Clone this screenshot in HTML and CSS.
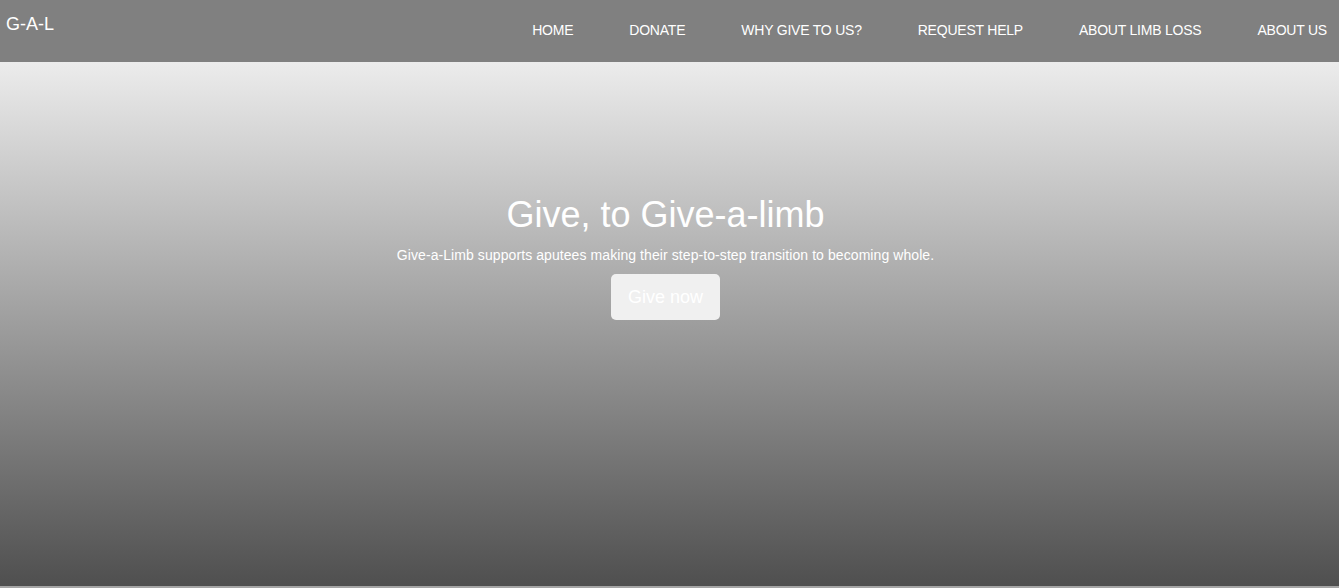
FILE: index.html
```html
<!DOCTYPE html>
<html lang="en">
<head>
<meta charset="utf-8">
<title>Give-a-Limb</title>
<link rel="stylesheet" href="styles.css">
</head>
<body>
<header class="navbar">
  <a class="brand" href="#">G-A-L</a>
  <nav class="nav">
    <a href="#">HOME</a>
    <a href="#">DONATE</a>
    <a href="#">WHY GIVE TO US?</a>
    <a href="#">REQUEST HELP</a>
    <a href="#">ABOUT LIMB LOSS</a>
    <a href="#">ABOUT US</a>
  </nav>
</header>
<section class="hero">
  <div class="hero-content">
    <h1 class="hero-title">Give, to Give-a-limb</h1>
    <p class="hero-text">Give-a-Limb supports aputees making their step-to-step transition to becoming whole.</p>
    <a class="hero-btn" href="#">Give now</a>
  </div>
</section>
<div class="strip"></div>
</body>
</html>
```

FILE: styles.css
```css
* { box-sizing: border-box; }
html, body { margin: 0; padding: 0; }
body {
  font-family: "Liberation Sans", Arial, sans-serif;
  background: #9a9a9a;
  overflow: hidden;
  height: 588px;
}
a { text-decoration: none; color: #fff; }

.navbar {
  height: 62px;
  background: #808080;
  display: flex;
  justify-content: space-between;
  align-items: flex-start;
}
.brand {
  font-size: 18px;
  line-height: 20px;
  padding: 14px 0 0 6px;
}
.nav {
  display: flex;
  gap: 56px;
  padding: 22px 12px 0 0;
}
.nav a {
  font-size: 14px;
  line-height: 16px;
  letter-spacing: -0.22px;
}

.hero {
  height: 524px;
  background: linear-gradient(to bottom, #ececec 0%, #4f4f4f 100%);
  display: flex;
  justify-content: center;
  padding-right: 8px;
}
.hero-content {
  display: flex;
  flex-direction: column;
  align-items: center;
  padding-top: 133px;
  color: #fff;
}
.hero-title {
  margin: 0;
  font-weight: normal;
  font-size: 36px;
  line-height: 40px;
}
.hero-text {
  margin: 12px 0 0;
  font-size: 14px;
  line-height: 16px;
  letter-spacing: 0.08px;
}
.hero-btn {
  margin-top: 11px;
  width: 109px;
  height: 46px;
  background: #f0f0f0;
  border-radius: 5px;
  color: #fff;
  font-size: 18px;
  display: flex;
  align-items: center;
  justify-content: center;
}

.strip {
  height: 2px;
  background: #a5a5a5;
}
```
